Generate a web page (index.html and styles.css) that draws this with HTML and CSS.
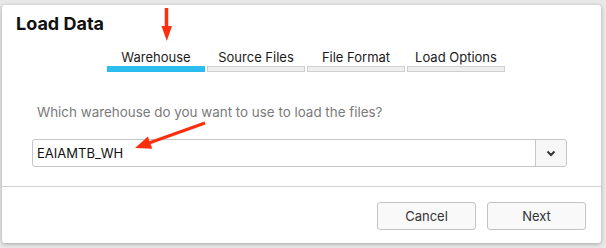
FILE: index.html
```html
<!DOCTYPE html>
<html>
<head>
    <title>Load Data</title>
    <link rel="stylesheet" href="styles.css">
</head>
<body>
    <div class="dialog">
        <div class="dialog-body">
            <h2 class="title">Load Data</h2>

            <div class="steps">
                <div class="step active">
                    <span class="step-label">Warehouse</span>
                    <div class="step-bar"></div>
                </div>
                <div class="step">
                    <span class="step-label">Source Files</span>
                    <div class="step-bar"></div>
                </div>
                <div class="step">
                    <span class="step-label">File Format</span>
                    <div class="step-bar"></div>
                </div>
                <div class="step">
                    <span class="step-label">Load Options</span>
                    <div class="step-bar"></div>
                </div>
            </div>

            <p class="question">Which warehouse do you want to use to load the files?</p>

            <div class="select">
                <span class="select-value">EAIAMTB_WH</span>
                <span class="select-toggle">
                    <svg width="10" height="7" viewBox="0 0 10 7"><path d="M1.5 1.5 L5 5 L8.5 1.5" fill="none" stroke="#333" stroke-width="2"/></svg>
                </span>
            </div>
        </div>

        <div class="dialog-footer">
            <button class="btn">Cancel</button>
            <button class="btn">Next</button>
        </div>
    </div>

    <!-- annotation arrows drawn over the screenshot -->
    <svg class="marks" width="606" height="248" viewBox="0 0 606 248">
        <line x1="166.5" y1="8" x2="166.5" y2="28" stroke="#fb2f0e" stroke-width="3.5"/>
        <polygon points="161.5,26 172,26 166.8,41" fill="#fb2f0e"/>
        <line x1="205" y1="123" x2="149" y2="143" stroke="#fb2f0e" stroke-width="3"/>
        <polygon points="135,148 152.3,148.7 147.9,136.5" fill="#fb2f0e"/>
    </svg>
</body>
</html>
```

FILE: styles.css
```css
body {
    font-family: 'Inter', 'Liberation Sans', sans-serif;
    background: #e9e9e9;
    color: #222;
    margin: 0;
    padding: 5px 5px 5px 2px;
    position: relative;
    height: 248px;
    box-sizing: border-box;
}
.dialog {
    width: 599px;
    height: 238px;
    background: #fff;
    border-radius: 3px;
    box-shadow: 0 1px 4px rgba(0,0,0,0.3);
    display: flex;
    flex-direction: column;
}
.dialog-body {
    flex-grow: 1;
}
.title {
    margin: 0;
    padding: 8px 14px 0;
    font-size: 18px;
    line-height: 22px;
    font-weight: 700;
    color: #111;
}
.steps {
    display: flex;
    gap: 2px;
    margin: 14px 0 0 105px;
}
.step {
    width: 98px;
    text-align: center;
}
.step-label {
    display: block;
    font-size: 13px;
    line-height: 16px;
    margin-bottom: 1px;
    color: #1a1a1a;
}
.step-bar {
    height: 4px;
    border: 1px solid #cfcfcf;
    background: #efefef;
}
.step.active .step-bar {
    background: #2bbcf0;
    border-color: #2bbcf0;
}
.question {
    margin: 31px 0 0 35px;
    font-size: 13.4px;
    line-height: 18px;
    color: #7a7a7a;
}
.select {
    display: flex;
    margin: 18px 34px 0 30px;
    height: 28px;
    border: 1px solid #c6c6c6;
    border-radius: 3px;
    box-sizing: border-box;
}
.select-value {
    flex-grow: 1;
    padding-left: 4px;
    font-size: 13px;
    line-height: 26px;
    color: #111;
}
.select-toggle {
    width: 30px;
    border-left: 1px solid #c6c6c6;
    background: #f7f7f7;
    border-radius: 0 3px 3px 0;
    display: flex;
    align-items: center;
    justify-content: center;
}
.dialog-footer {
    border-top: 1px solid #d0d0d0;
    padding: 15px 15px 13px;
    display: flex;
    justify-content: flex-end;
    gap: 11px;
}
.btn {
    width: 99px;
    height: 28px;
    font-family: inherit;
    font-size: 13px;
    color: #333;
    background: #f9f9f9;
    border: 1px solid #c4c4c4;
    border-radius: 3px;
}
.marks {
    position: absolute;
    left: 0;
    top: 0;
    pointer-events: none;
}
```
